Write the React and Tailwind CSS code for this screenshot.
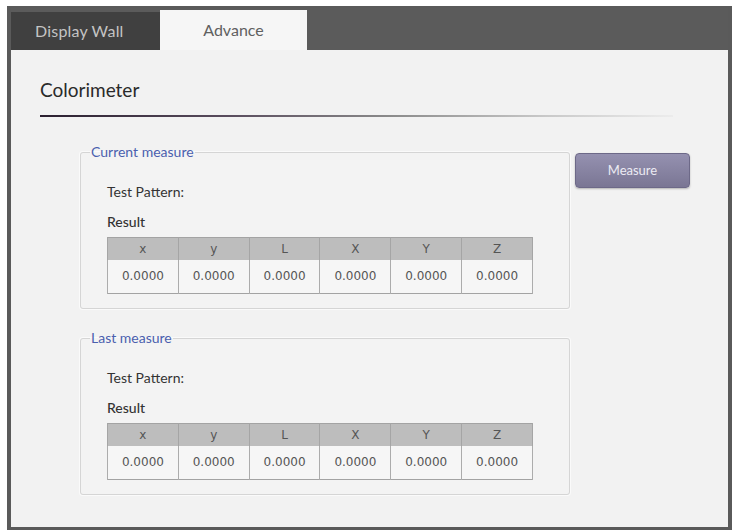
import React from "react";

const UI = "Lato, 'Open Sans', 'Noto Sans', sans-serif";
const NUM = "'DejaVu Sans', Verdana, sans-serif";

const COLS = ["x", "y", "L", "X", "Y", "Z"];

function MeasureBox({ title, values }) {
  return (
    <fieldset className="w-[490px] border border-[#d5d5d5] rounded-[3px] pl-[26px] pb-[14px] bg-[#f3f3f3] shadow-[0_0_0_1px_#fafafa]">
      <legend className="-ml-[17px] px-[1px] text-[14px] leading-[16px] text-[#4a5fae]">{title}</legend>
      <div className="mt-[23px] text-[14px] leading-[18px] text-[#333]">Test Pattern:</div>
      <div className="mt-[12px] text-[14px] leading-[18px] font-medium text-[#333]">Result</div>
      <table className="mt-[6px] w-[426px] border-collapse border border-[#a3a3a3] table-fixed" style={{ fontFamily: NUM }}>
        <thead>
          <tr className="bg-[#bdbdbd]">
            {COLS.map(c => (
              <th key={c} className="h-[22px] border-x border-[#a5a5a5] text-[12px] font-normal text-[#555]">{c}</th>
            ))}
          </tr>
        </thead>
        <tbody>
          <tr className="bg-[#f6f6f6]">
            {values.map((v, i) => (
              <td key={i} className="h-[34px] border-x border-[#acacac] text-center text-[12px] text-[#555]">{v}</td>
            ))}
          </tr>
        </tbody>
      </table>
    </fieldset>
  );
}

export default function App() {
  const zeros = COLS.map(() => "0.0000");
  return (
    <div className="w-[734px] h-[531px] bg-white pt-[6px] pl-[7px]" style={{ fontFamily: UI }}>
      <div className="w-[725px] h-[524px] border-x-[4px] border-b-[3px] border-t-[2px] border-[#5a5a5a] bg-[#f2f2f2] flex flex-col">
        {/* tab strip */}
        <div className="h-[42px] bg-[#5b5b5b] flex items-end shrink-0">
          <div className="w-[149px] h-[38px] bg-[#404040] flex items-center pl-[24px] text-[16px] tracking-[0.2px] text-[#c4c4c4]">
            Display Wall
          </div>
          <div className="w-[147px] h-[40px] bg-[#f6f6f6] flex items-center justify-center text-[16px] text-[#606060]">
            Advance
          </div>
        </div>

        <div className="pl-[29px]">
          <div className="mt-[28px] text-[19px] leading-[24px] text-[#2a2a2a]">Colorimeter</div>
          <div className="mt-[13px] w-[633px] h-[2px] bg-[linear-gradient(to_right,#2b2030,#5a4d5e_30%,#8a8a8a_55%,#c9c9c9_80%,#ececec)]" />

          <div className="ml-[40px] mt-[27px] flex items-start">
            <div className="flex flex-col gap-[21px]">
              <MeasureBox title="Current measure" values={zeros} />
              <MeasureBox title="Last measure" values={zeros} />
            </div>
            <button className="ml-[5px] mt-[9px] w-[115px] h-[35px] rounded-[4px] border border-[#6d6988] bg-[linear-gradient(to_bottom,#9591b0,#7a7694)] text-[13px] text-[#ecebf3] shadow-[0_1px_2px_rgba(0,0,0,0.25)]">
              Measure
            </button>
          </div>
        </div>
      </div>
    </div>
  );
}
